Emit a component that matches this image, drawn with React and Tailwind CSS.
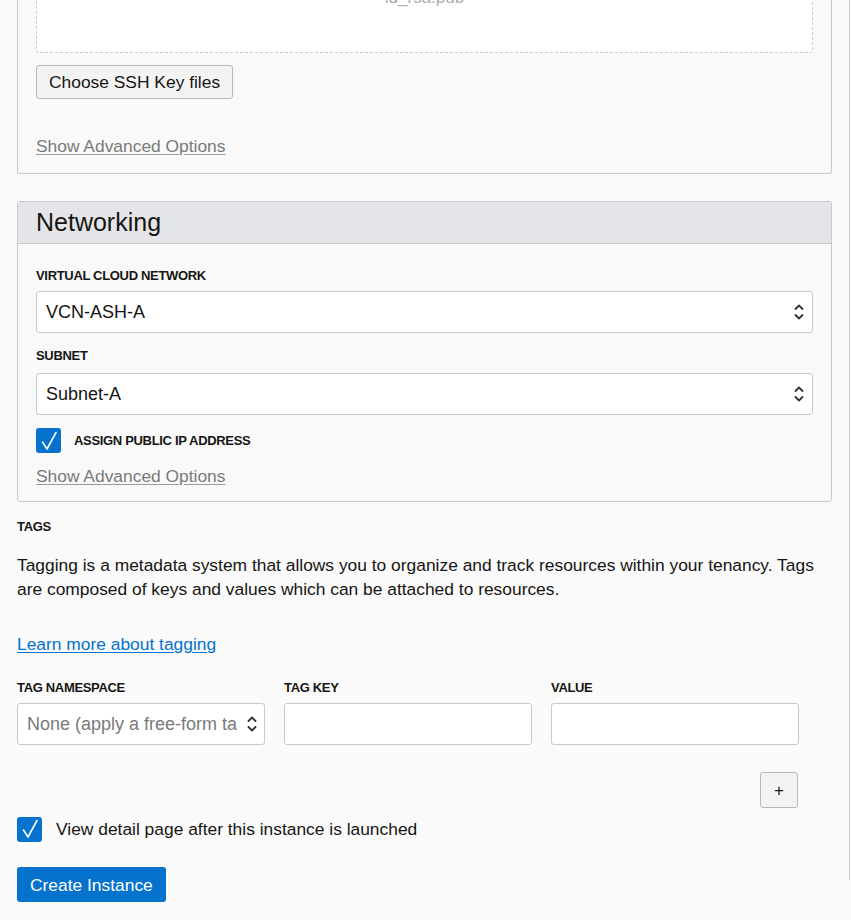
import { useState } from "react";

const font = { fontFamily: '"Liberation Sans", Arial, sans-serif' };

function UpDown() {
  return (
    <svg width="12" height="20" viewBox="0 0 12 20" fill="none" stroke="#333" strokeWidth="1.8" strokeLinecap="round" strokeLinejoin="round">
      <path d="M2.5 7 L6 3.5 L9.5 7" />
      <path d="M2.5 13 L6 16.5 L9.5 13" />
    </svg>
  );
}

function Check() {
  return (
    <span className="h-[25px] w-[25px] shrink-0 rounded-[3px] bg-[#0572ce] flex items-center justify-center">
      <svg width="18" height="20" viewBox="0 0 18 20" fill="none" stroke="#fff" strokeWidth="1.6" strokeLinecap="round" strokeLinejoin="round">
        <path d="M2.5 11 L7 18 L16 1.5" />
      </svg>
    </span>
  );
}

function Select({ value }) {
  return (
    <div className="h-[42px] w-full rounded-[3px] border border-[#c7c9cc] bg-white flex items-center justify-between pl-[9px] pr-[7px]">
      <span className="text-[18px] text-[#161513]">{value}</span>
      <UpDown />
    </div>
  );
}

function Label({ children }) {
  return (
    <div className="text-[13px] leading-[16px] font-semibold text-[#161513] tracking-tight uppercase">
      {children}
    </div>
  );
}

function GrayLink() {
  return (
    <a className="text-[17.4px] text-[#7a7a7a] underline underline-offset-2 decoration-[#9a9a9a]">
      Show Advanced Options
    </a>
  );
}

export default function App() {
  const [tags] = useState(["TAG NAMESPACE", "TAG KEY", "VALUE"]);

  return (
    <div style={font} className="h-[920px] w-[851px] overflow-hidden bg-[#fafafa]">
      <div className="w-[850px] h-full border-r border-[#c8cacd] pl-[17px] pr-[17px]">

        {/* SSH KEYS CARD */}

        <div className="-mt-[40px] rounded-b-[3px] border border-t-0 border-[#c7c9cc] bg-[#f9f9f9] px-[18px] pb-[14px]">
          <div className="h-[93px] rounded-[3px] border border-dashed border-[#c8cacd] bg-white flex justify-center">
            <span className="text-[17px] text-[#a9adb1] mt-[24px] h-fit">id_rsa.pub</span>
          </div>
          <button className="mt-[12px] h-[34px] px-[12px] rounded-[3px] border border-[#b6b9bc] bg-[#f3f3f3] text-[17.4px] text-[#161513]">
            Choose SSH Key files
          </button>
          <div className="mt-[34px]">
            <GrayLink />
          </div>
        </div>

        {/* NETWORKING */}

        <div className="mt-[27px] rounded-[3px] border border-[#c7c9cc] bg-[#f9f9f9]">
          <div className="h-[42px] bg-[#e3e5e8] border-b border-[#c7c9cc] flex items-center px-[18px]">
            <h2 className="text-[25px] text-[#161513]">Networking</h2>
          </div>
          <div className="px-[18px] pt-[24px] pb-[12px]">
            <Label>Virtual Cloud Network</Label>
            <div className="mt-[7px]">
              <Select value="VCN-ASH-A" />
            </div>
            <div className="mt-[15px]">
              <Label>Subnet</Label>
            </div>
            <div className="mt-[9px]">
              <Select value="Subnet-A" />
            </div>
            <div className="mt-[13px] flex items-center gap-[13px]">
              <Check />
              <Label>Assign Public IP Address</Label>
            </div>
            <div className="mt-[10px]">
              <GrayLink />
            </div>
          </div>
        </div>

        {/* TAGS */}

        <div className="mt-[17px]">
          <Label>Tags</Label>
        </div>
        <p className="mt-[18px] text-[17.4px] leading-[24px] text-[#161513] pr-[4px]">
          Tagging is a metadata system that allows you to organize and track resources within your tenancy. Tags are composed of keys and values which can be attached to resources.
        </p>
        <div className="mt-[30px]">
          <a className="text-[17.4px] text-[#0572ce] underline underline-offset-2">
            Learn more about tagging
          </a>
        </div>

        <div className="mt-[23px] flex gap-[19px]">
          {tags.map((t, i) => (
            <div key={t} className="w-[248px]">
              <Label>{t}</Label>
              <div className="mt-[7px] h-[42px] rounded-[3px] border border-[#c7c9cc] bg-white flex items-center justify-between pl-[9px] pr-[6px]">
                {i === 0 && (
                  <>
                    <span className="text-[18px] text-[#7a7a7a] whitespace-nowrap overflow-hidden">None (apply a free-form ta</span>
                    <UpDown />
                  </>
                )}
              </div>
            </div>
          ))}
        </div>

        <div className="mt-[27px] flex justify-end pr-[34px]">
          <button className="h-[36px] w-[38px] rounded-[3px] border border-[#b6b9bc] bg-[#f3f3f3] text-[17px] text-[#161513]">
            +
          </button>
        </div>

        <div className="mt-[8px] flex items-center gap-[14px]">
          <Check />
          <span className="text-[17.4px] text-[#161513]">View detail page after this instance is launched</span>
        </div>

        <button className="mt-[25px] h-[35px] px-[13px] rounded-[3px] bg-[#0572ce] text-[17.4px] text-white">
          Create Instance
        </button>
      </div>
    </div>
  );
}
